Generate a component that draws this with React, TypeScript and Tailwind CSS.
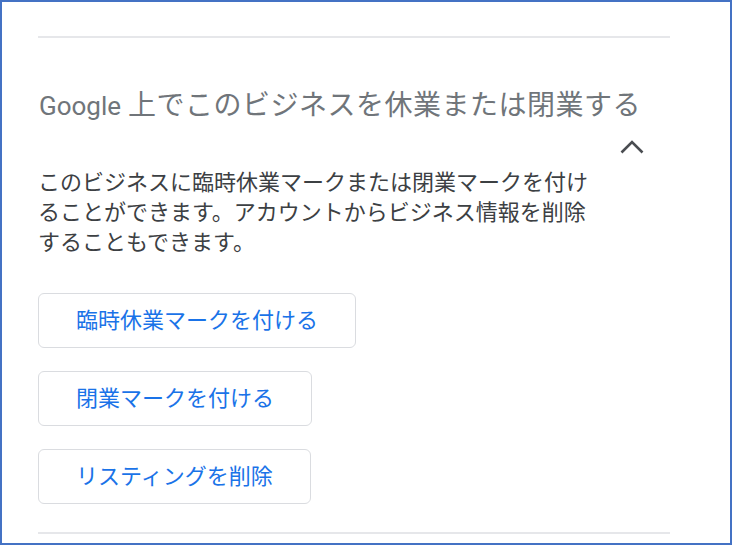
import React from 'react';

const actions = ['臨時休業マークを付ける', '閉業マークを付ける', 'リスティングを削除'];

const ChevronUp = () => (
  <svg width="24" height="24" viewBox="0 0 24 24" fill="none">
    <path d="M1.5 17.5 L12 7 L22.5 17.5" stroke="#4a4d51" strokeWidth="2.6" />
  </svg>
);

export default function App() {
  return (
    <div
      className="w-[732px] h-[545px] border-2 border-[#4472c4] bg-white overflow-hidden"
      style={{ fontFamily: 'Roboto, "Noto Sans CJK JP", sans-serif' }}
    >
      <div className="pl-[36px] w-[668px]">
        <div className="mt-[34px] h-[2px] bg-[#e6e7ea]" />

        <h2 className="mt-[50px] h-[36px] flex items-center text-[#70757a] whitespace-nowrap">
          <span className="text-[26px] leading-[36px] pl-[1px]">Google</span>
          <span className="ml-[7px] text-[28px] leading-[36px] tracking-[0.5px]">上でこのビジネスを休業または閉業する</span>
        </h2>

        <div className="mt-[11px] h-[24px] flex justify-end pr-[26px]">
          <ChevronUp />
        </div>

        <p className="mt-[9px] text-[22px] leading-[30px] text-[#3c4043] whitespace-nowrap">
          このビジネスに臨時休業マークまたは閉業マークを付け
          <br />
          ることができます。アカウントからビジネス情報を削除
          <br />
          することもできます。
        </p>

        <div className="mt-[35px] flex flex-col items-start gap-[23px]">
          {actions.map((label) => (
            <button
              key={label}
              className="h-[55px] px-[37px] rounded-[6px] border border-[#dadce0] bg-white text-[22px] text-[#1a73e8] whitespace-nowrap"
            >
              {label}
            </button>
          ))}
        </div>

        <div className="mt-[28px] h-[2px] bg-[#e6e7ea]" />
      </div>
    </div>
  );
}
